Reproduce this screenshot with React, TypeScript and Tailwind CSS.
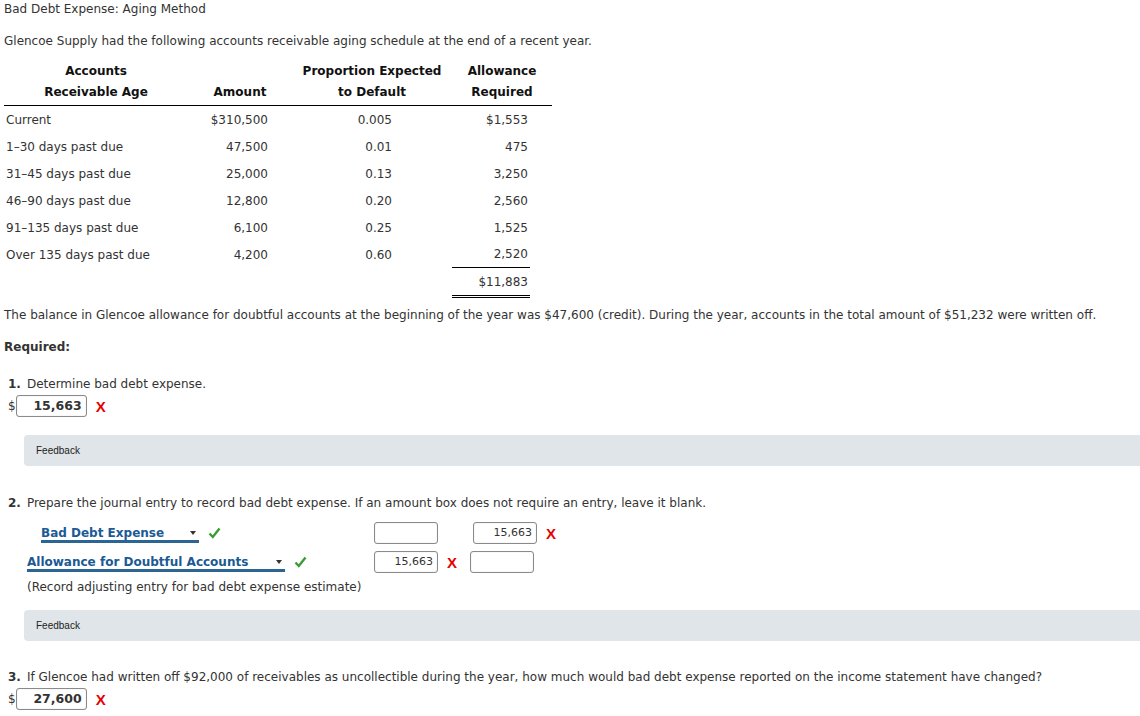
import * as React from "react";

const rows = [
  ["Current", "$310,500", "0.005", "$1,553"],
  ["1\u201330 days past due", "47,500", "0.01", "475"],
  ["31\u201345 days past due", "25,000", "0.13", "3,250"],
  ["46\u201390 days past due", "12,800", "0.20", "2,560"],
  ["91\u2013135 days past due", "6,100", "0.25", "1,525"],
  ["Over 135 days past due", "4,200", "0.60", "2,520"],
];

const Wrong = ({ className = "" }: { className?: string }) => (
  <span className={`font-['Liberation_Sans',sans-serif] text-[15px] font-bold leading-none text-[#e60000] ${className}`}>X</span>
);

const Check = () => (
  <svg width="13" height="12" viewBox="0 0 13 12" className="ml-[9px]">
    <path d="M1.5 6.5 L4.8 10 L11.5 1.5" fill="none" stroke="#3d9b35" strokeWidth="2.4" />
  </svg>
);

const Box = ({ value, big }: { value?: string; big?: boolean }) => (
  <div
    className={`flex h-[22px] items-center justify-end rounded-[3px] border border-[#8a8a8a] bg-white pr-[4px] shadow-[inset_0_0_1px_#bbb] ${
      big ? "w-[71px] text-[12.5px] font-bold" : "w-[64px] text-[11px]"
    }`}
  >
    {value}
  </div>
);

const Select = ({ label, w }: { label: string; w: string }) => (
  <div className={`mt-[2px] flex h-[17px] items-end justify-between border-b-[3px] border-[#2b6594] text-[12px] font-bold leading-[14px] text-[#1b5a94] ${w}`}>
    <span>{label}</span>
    <span className="mb-[5px] mr-[3px] h-0 w-0 border-x-[3px] border-t-[4px] border-x-transparent border-t-[#333]" />
  </div>
);

const Feedback = () => (
  <div className="ml-[24px] flex h-[31px] items-center rounded-l-[4px] bg-[#dfe5e8] pl-[12px] font-['Liberation_Sans',sans-serif] text-[10px] text-[#222]">
    Feedback
  </div>
);

export default function App() {
  return (
    <div className="h-[716px] w-[1140px] overflow-hidden bg-white pt-[1px] font-['DejaVu_Sans',sans-serif] text-[12px] leading-[16px] text-[#333]">
      <div className="pl-[4px]">Bad Debt Expense: Aging Method</div>
      <div className="mt-[16px] pl-[4px]">Glencoe Supply had the following accounts receivable aging schedule at the end of a recent year.</div>

      <div className="ml-[4px] mt-[12px] w-[548px]">
        <div className="grid grid-cols-[184px_104px_160px_100px] border-b border-black pb-[2px] text-center font-bold leading-[21px] text-[#111]">
          <div>Accounts<br />Receivable Age</div>
          <div className="flex items-end justify-center">Amount</div>
          <div>Proportion Expected<br />to Default</div>
          <div>Allowance<br />Required</div>
        </div>
        {rows.map((r, i) => (
          <div key={r[0]} className="grid h-[27px] grid-cols-[184px_104px_160px_100px] items-center">
            <div className="pl-[2px]">{r[0]}</div>
            <div className="pr-[24px] text-right">{r[1]}</div>
            <div className="pr-[60px] text-right">{r[2]}</div>
            <div className={`flex h-full w-[78px] items-center justify-end pr-[2px] ${i === rows.length - 1 ? "border-b border-black" : ""}`}>{r[3]}</div>
          </div>
        ))}
        <div className="grid h-[27px] grid-cols-[184px_104px_160px_100px] items-center">
          <div />
          <div />
          <div />
          <div className="flex h-full w-[78px] items-center justify-end pr-[2px]">$11,883</div>
        </div>
        <div className="ml-[448px] w-[78px] border-y border-black pt-[1px]" />
      </div>

      <div className="mt-[9px] pl-[4px]">
        The balance in Glencoe allowance for doubtful accounts at the beginning of the year was $47,600 (credit). During the year, accounts in the total amount of $51,232 were written off.
      </div>
      <div className="mt-[16px] pl-[4px] font-bold">Required:</div>

      <div className="mt-[21px] pl-[8px]">
        <span className="font-bold">1.</span>
        <span className="ml-[6px]">Determine bad debt expense.</span>
      </div>
      <div className="mt-[3px] flex items-center pl-[8px]">
        <span>$</span>
        <Box value="15,663" big />
        <Wrong className="ml-[9px]" />
      </div>
      <div className="mt-[18px]">
        <Feedback />
      </div>

      <div className="mt-[29px] pl-[8px]">
        <span className="font-bold">2.</span>
        <span className="ml-[6px]">Prepare the journal entry to record bad debt expense. If an amount box does not require an entry, leave it blank.</span>
      </div>
      <div className="mt-[11px] flex items-center">
        <div className="flex w-[374px] items-center pl-[41px]">
          <Select label="Bad Debt Expense" w="w-[158px]" />
          <Check />
        </div>
        <Box />
        <div className="ml-[35px]"><Box value="15,663" /></div>
        <Wrong className="ml-[9px]" />
      </div>
      <div className="mt-[7px] flex items-center">
        <div className="flex w-[374px] items-center pl-[27px]">
          <Select label="Allowance for Doubtful Accounts" w="w-[258px]" />
          <Check />
        </div>
        <Box value="15,663" />
        <Wrong className="ml-[9px]" />
        <div className="ml-[13px]"><Box /></div>
      </div>
      <div className="mt-[6px] pl-[27px]">(Record adjusting entry for bad debt expense estimate)</div>
      <div className="mt-[15px]">
        <Feedback />
      </div>

      <div className="mt-[28px] pl-[8px]">
        <span className="font-bold">3.</span>
        <span className="ml-[6px]">If Glencoe had written off $92,000 of receivables as uncollectible during the year, how much would bad debt expense reported on the income statement have changed?</span>
      </div>
      <div className="mt-[3px] flex items-center pl-[8px]">
        <span>$</span>
        <Box value="27,600" big />
        <Wrong className="ml-[9px]" />
      </div>
    </div>
  );
}
